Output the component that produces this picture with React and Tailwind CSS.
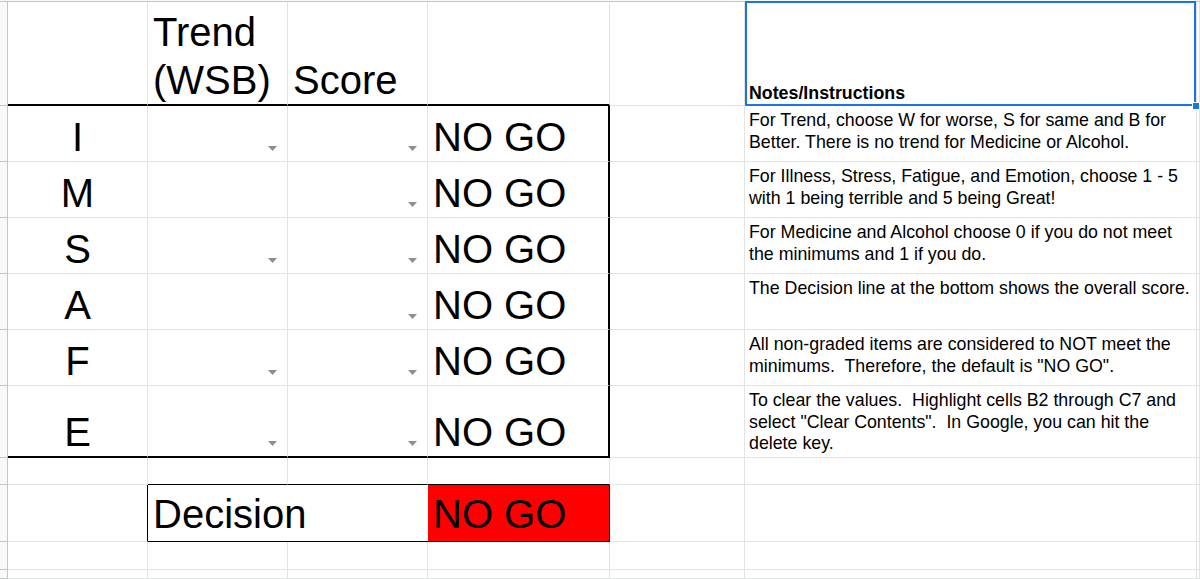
import React from 'react';

const RIGHT = {
  thin: 'border-r border-r-[#e2e3e3]',
  thick: 'border-r-2 border-r-black',
  black: 'border-r border-r-black',
  none: '',
};

const BOTTOM = {
  thin: 'border-b border-b-[#e2e3e3]',
  thick: 'border-b-2 border-b-black',
  black: 'border-b border-b-black',
};

const Cell = ({ r = 'thin', b = 'thin', className = '', children }) => (
  <div className={`${RIGHT[r]} ${BOTTOM[b]} min-w-0 ${className}`}>{children}</div>
);

const RowHead = () => (
  <div className="bg-[#f8f9fa] border-r border-r-[#c4c7c5] border-b border-b-[#c4c7c5]" />
);

const Arrow = () => (
  <svg width="9" height="5" viewBox="0 0 9 5">
    <path d="M0 0h9L4.5 5z" fill="#8e8e8e" />
  </svg>
);

const rows = [
  {
    label: 'I',
    trend: true,
    note: 'For Trend, choose W for worse, S for same and B for Better. There is no trend for Medicine or Alcohol.',
  },
  {
    label: 'M',
    trend: false,
    note: 'For Illness, Stress, Fatigue, and Emotion, choose 1 - 5 with 1 being terrible and 5 being Great!',
  },
  {
    label: 'S',
    trend: true,
    note: 'For Medicine and Alcohol choose 0 if you do not meet the minimums and 1 if you do.',
  },
  {
    label: 'A',
    trend: false,
    note: 'The Decision line at the bottom shows the overall score.',
  },
  {
    label: 'F',
    trend: true,
    note: 'All non-graded items are considered to NOT meet the minimums.  Therefore, the default is "NO GO".',
  },
  {
    label: 'E',
    trend: true,
    note: 'To clear the values.  Highlight cells B2 through C7 and select "Clear Contents".  In Google, you can hit the delete key.',
  },
];

const big = 'text-[40px] leading-[40px] text-black';
const small = 'text-[17.8px] leading-[21.5px] text-black';

export default function App() {
  return (
    <div className="w-[1200px] h-[579px] overflow-hidden bg-white font-['Liberation_Sans',Arial,sans-serif]">
      <div className="grid h-full grid-cols-[8px_140px_140px_140px_182px_135px_452px_1fr] grid-rows-[2px_104px_56px_56px_56px_56px_56px_72px_27px_57px_28px_1fr]">
        {/* column header edge */}
        <div className="col-span-8 bg-[#f8f9fa] border-b border-b-[#c4c7c5]" />

        {/* row 1 */}
        <RowHead />
        <Cell b="thick" />
        <Cell b="thick" className="flex items-end pl-[5px] text-[40px] leading-[48px]">
          <span>Trend (WSB)</span>
        </Cell>
        <Cell b="thick" className="flex items-end pl-[5px] text-[40px] leading-[48px]">
          <span>Score</span>
        </Cell>
        <Cell b="thick" />
        <Cell />
        <Cell className={`relative flex items-end pl-[4px] pb-[1px] font-bold ${small}`}>
          <span>Notes/Instructions</span>
          <div className="absolute -top-[1px] left-0 right-0 -bottom-[1px] border-2 border-[#1a73e8] pointer-events-none" />
          <div className="absolute -right-[4px] -bottom-[5px] z-10 w-[8px] h-[8px] bg-[#1a73e8] border border-white" />
        </Cell>
        <Cell />

        {/* rows 2-7 */}
        {rows.map((row, i) => {
          const b = i === rows.length - 1 ? 'thick' : 'thin';
          return (
            <React.Fragment key={row.label}>
              <RowHead />
              <Cell b={b} className={`flex items-end justify-center pb-[4px] ${big}`}>
                {row.label}
              </Cell>
              <Cell b={b} className="flex items-end justify-end pr-[10px] pb-[10px]">
                {row.trend && <Arrow />}
              </Cell>
              <Cell b={b} className="flex items-end justify-end pr-[10px] pb-[10px]">
                <Arrow />
              </Cell>
              <Cell r="thick" b={b} className={`flex items-end pl-[5px] pb-[4px] whitespace-nowrap ${big}`}>
                NO GO
              </Cell>
              <Cell />
              <Cell className={`pl-[4px] pt-[4px] whitespace-pre-wrap ${small}`}>{row.note}</Cell>
              <Cell />
            </React.Fragment>
          );
        })}

        {/* row 8 */}
        <RowHead />
        <Cell />
        <Cell b="black" />
        <Cell b="black" />
        <Cell b="black" />
        <Cell />
        <Cell />
        <Cell />

        {/* row 9: decision */}
        <RowHead />
        <Cell r="black" />
        <Cell r="none" b="black" className={`col-span-2 flex items-end pl-[5px] pb-[7px] ${big}`}>
          Decision
        </Cell>
        <Cell r="black" b="black" className={`flex items-end pl-[5px] pb-[7px] bg-[#ff0000] whitespace-nowrap ${big}`}>
          NO GO
        </Cell>
        <Cell />
        <Cell />
        <Cell />

        {/* row 10 */}
        <RowHead />
        <Cell />
        <Cell />
        <Cell />
        <Cell />
        <Cell />
        <Cell />
        <Cell />

        {/* row 11 */}
        <RowHead />
        <Cell />
        <Cell />
        <Cell />
        <Cell />
        <Cell />
        <Cell />
        <Cell />
      </div>
    </div>
  );
}
